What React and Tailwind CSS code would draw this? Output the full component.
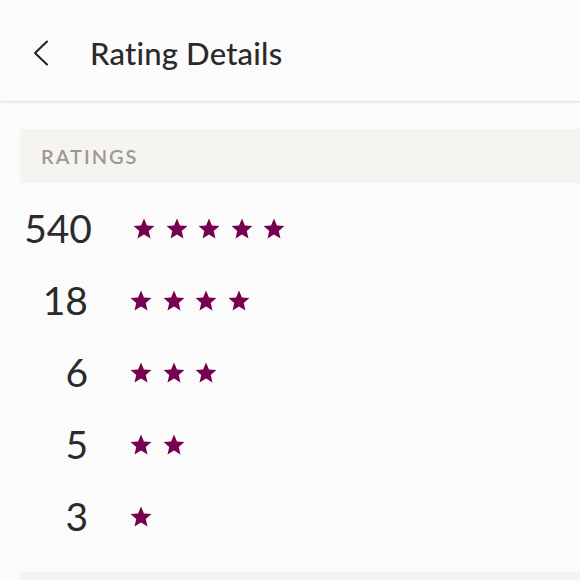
import React from "react";

const rows = [
  { count: 540, stars: 5 },
  { count: 18, stars: 4 },
  { count: 6, stars: 3 },
  { count: 5, stars: 2 },
  { count: 3, stars: 1 },
];

function Star() {
  return (
    <svg viewBox="0 0 22 21" className="w-[22px] h-[21px]" fill="#780050">
      <path d="M11 0.5L13.94 7.45 21.46 8.1 15.76 13.05 17.47 20.4 11 16.5 4.53 20.4 6.24 13.05 0.54 8.1 8.06 7.45z" />
    </svg>
  );
}

export default function App() {
  return (
    <div className="w-[580px] h-[580px] overflow-hidden bg-[#fbfbfb] font-['Lato',sans-serif]">
      {/* header */}
      <div className="h-[102px] flex items-center border-b border-[#e4e4e4] shadow-[0_1px_2px_rgba(0,0,0,0.06)]">
        <button className="ml-[30px] mt-[4px] w-[22px] h-[30px] flex items-center justify-center">
          <svg viewBox="0 0 16 26" className="w-[16px] h-[26px]" fill="none" stroke="#222" strokeWidth="2" strokeLinecap="round" strokeLinejoin="round">
            <path d="M14 1.5L2 13l12 11.5" />
          </svg>
        </button>
        <h1 className="ml-[38px] mt-[5px] text-[31px] font-medium text-[#2a2a2a] tracking-[0.2px]">Rating Details</h1>
      </div>

      {/* ratings */}
      <div className="pl-[20px] pt-[27px]">
        <div className="h-[54px] bg-[#f6f4f1] flex items-center pl-[21px]">
          <span className="text-[20px] font-semibold tracking-[2px] text-[#9c9893]">RATINGS</span>
        </div>

        <div className="flex flex-col pt-[9px]">
          {rows.map((r) => (
            <div key={r.stars} className="h-[72px] flex items-center">
              <span className={"w-[72px] text-right text-[39px] leading-none text-[#2b2b2b] " + (r.count > 99 ? "ml-[0px]" : "-ml-[4px]")}>
                {r.count}
              </span>
              <div className={"flex gap-[10.5px] " + (r.count > 99 ? "ml-[41px]" : "ml-[42px]")}>
                {Array.from({ length: r.stars }).map((_, i) => (
                  <Star key={i} />
                ))}
              </div>
            </div>
          ))}
        </div>

        <div className="h-[20px] bg-[#f6f4f1] mt-[20px]" />
      </div>
    </div>
  );
}
